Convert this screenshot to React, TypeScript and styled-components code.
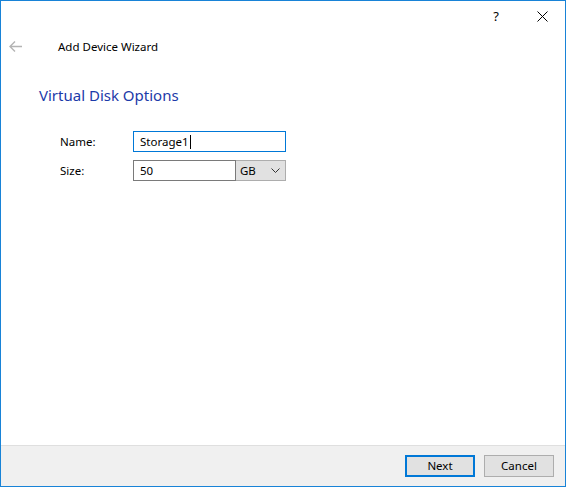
import styled, { createGlobalStyle } from 'styled-components'

const GlobalStyle = createGlobalStyle`
  html, body {
    margin: 0;
    padding: 0;
    background: #ffffff;
  }
  body {
    font-family: "Segoe UI", "Noto Sans", "Liberation Sans", sans-serif;
    color: #000000;
  }
`

const StyledWindow = styled.div`
  box-sizing: border-box;
  width: 566px;
  height: 487px;
  border: 1px solid #1883d7;
  background: #ffffff;
  display: flex;
  flex-direction: column;
`

const StyledTitleBar = styled.div`
  height: 30px;
  display: flex;
  justify-content: flex-end;
`

const StyledCaptionButton = styled.button`
  width: 46px;
  height: 30px;
  border: 0;
  padding: 0;
  background: transparent;
  display: flex;
  align-items: center;
  justify-content: center;
  font-family: "Segoe UI", "Noto Sans", "Liberation Sans", sans-serif;
  font-size: 13px;
  color: #000000;
`

const StyledHeader = styled.div`
  height: 30px;
  display: flex;
  align-items: center;
  padding-left: 8px;
`

const StyledBack = styled.div`
  width: 14px;
  display: flex;
  align-items: center;
  margin-right: 35px;
`

const StyledWizardTitle = styled.span`
  font-size: 11.5px;
`

const StyledBody = styled.div`
  flex: 1;
  padding: 24px 0 0 38px;
`

const StyledHeading = styled.h1`
  margin: 0 0 26px;
  font-size: 15px;
  font-weight: normal;
  color: #1c3aa9;
  line-height: 20px;
`

const StyledForm = styled.div`
  display: grid;
  grid-template-columns: 74px 153px;
  row-gap: 8px;
  align-items: center;
  padding-left: 20px;
`

const StyledLabel = styled.label`
  font-size: 11.5px;
  padding-left: 1px;
`

const StyledField = styled.div<{ $focused?: boolean }>`
  box-sizing: border-box;
  height: 21px;
  border: 1px solid ${(p) => (p.$focused ? '#0078d7' : '#7a7a7a')};
  display: flex;
  align-items: center;
  padding-left: 6px;
  font-size: 11.5px;
  background: #ffffff;
  flex: 1;
`

const StyledCaret = styled.span`
  display: inline-block;
  width: 1px;
  height: 14px;
  background: #000000;
  margin-left: 1px;
`

const StyledSizeRow = styled.div`
  display: flex;
`

const StyledSelect = styled.div`
  box-sizing: border-box;
  width: 50px;
  height: 21px;
  border: 1px solid #adadad;
  border-left: 0;
  background: #e1e1e1;
  display: flex;
  align-items: center;
  justify-content: space-between;
  padding: 0 5px 0 4px;
  font-size: 11.5px;
`

const StyledFooter = styled.div`
  height: 41px;
  box-sizing: border-box;
  border-top: 1px solid #dfdfdf;
  background: #f0f0f0;
  display: flex;
  justify-content: flex-end;
  align-items: flex-start;
  gap: 9px;
  padding: 9px 11px 0 0;
`

const StyledButton = styled.button<{ $primary?: boolean }>`
  box-sizing: border-box;
  width: 70px;
  height: 22px;
  background: #e1e1e1;
  border: ${(p) => (p.$primary ? '2px solid #0078d7' : '1px solid #adadad')};
  font-family: "Segoe UI", "Noto Sans", "Liberation Sans", sans-serif;
  font-size: 11.5px;
  line-height: 16px;
  color: #000000;
  padding: 0 0 1px;
`

export default function App() {
  return (
    <>
      <GlobalStyle />
      <StyledWindow>
        <StyledTitleBar>
          <StyledCaptionButton aria-label="Help">?</StyledCaptionButton>
          <StyledCaptionButton aria-label="Close">
            <svg width="11" height="11" viewBox="0 0 11 11">
              <path d="M0.5 0.5 L10.5 10.5 M10.5 0.5 L0.5 10.5" stroke="#000" strokeWidth="1" />
            </svg>
          </StyledCaptionButton>
        </StyledTitleBar>
        <StyledHeader>
          <StyledBack>
            <svg width="13" height="11" viewBox="0 0 13 11">
              <path d="M1 5.5 H13 M6 0.5 L1 5.5 L6 10.5" stroke="#b4b4b4" strokeWidth="1.4" fill="none" />
            </svg>
          </StyledBack>
          <StyledWizardTitle>Add Device Wizard</StyledWizardTitle>
        </StyledHeader>
        <StyledBody>
          <StyledHeading>Virtual Disk Options</StyledHeading>
          <StyledForm>
            <StyledLabel>Name:</StyledLabel>
            <StyledField $focused>
              Storage1
              <StyledCaret />
            </StyledField>
            <StyledLabel>Size:</StyledLabel>
            <StyledSizeRow>
              <StyledField>50</StyledField>
              <StyledSelect>
                GB
                <svg width="9" height="5" viewBox="0 0 9 5">
                  <path d="M0.5 0.5 L4.5 4.5 L8.5 0.5" stroke="#333" strokeWidth="1" fill="none" />
                </svg>
              </StyledSelect>
            </StyledSizeRow>
          </StyledForm>
        </StyledBody>
        <StyledFooter>
          <StyledButton $primary>Next</StyledButton>
          <StyledButton>Cancel</StyledButton>
        </StyledFooter>
      </StyledWindow>
    </>
  )
}
